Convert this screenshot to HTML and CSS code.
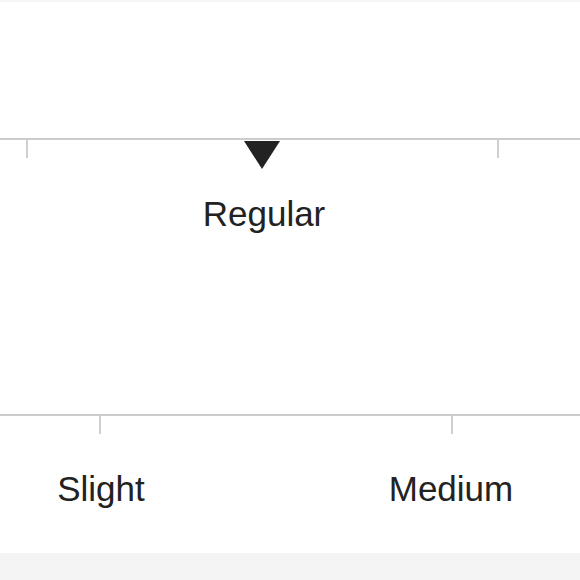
FILE: index.html
```html
<!DOCTYPE html>
<html lang="en">
<head>
<meta charset="utf-8">
<title>Scale</title>
<link rel="stylesheet" href="styles.css">
</head>
<body>
<div class="strip-top"></div>
<section class="scale scale-a">
  <div class="axis"></div>
  <div class="marks">
    <span class="tick tick-a1"></span>
    <span class="pointer"></span>
    <span class="tick tick-a2"></span>
  </div>
  <div class="labels">
    <span class="label label-regular">Regular</span>
  </div>
</section>
<section class="scale scale-b">
  <div class="axis"></div>
  <div class="marks">
    <span class="tick tick-b1"></span>
    <span class="tick tick-b2"></span>
  </div>
  <div class="labels">
    <span class="label label-slight">Slight</span>
    <span class="label label-medium">Medium</span>
  </div>
</section>
<div class="strip-bottom"></div>
</body>
</html>
```

FILE: styles.css
```css
html, body {
  margin: 0;
  padding: 0;
  background: #ffffff;
}
body {
  width: 580px;
  height: 580px;
  overflow: hidden;
  font-family: "Liberation Sans", Arial, sans-serif;
  color: #222222;
  display: flex;
  flex-direction: column;
}
.strip-top {
  height: 2px;
  background: #f5f5f5;
}
.scale-a {
  margin-top: 136px;
}
.scale-b {
  margin-top: 180px;
}
.axis {
  height: 2px;
  background: #cccccc;
}
.marks {
  display: flex;
  align-items: flex-start;
}
.scale-a .marks {
  height: 29px;
  padding-left: 26px;
}
.scale-b .marks {
  height: 18px;
  padding-left: 99px;
}
.tick {
  width: 2px;
  height: 18px;
  background: #d0d0d0;
  flex: none;
}
.pointer {
  flex: none;
  width: 0;
  height: 0;
  margin-top: 1px;
  margin-left: 216px;
  border-left: 18px solid transparent;
  border-right: 18px solid transparent;
  border-top: 28px solid #222222;
}
.tick-a2 {
  margin-left: 217px;
}
.tick-b2 {
  margin-left: 350px;
}
.labels {
  display: flex;
}
.scale-a .labels {
  margin-top: 25px;
  padding-left: 164px;
}
.scale-b .labels {
  margin-top: 35px;
  padding-left: 21px;
}
.label {
  font-size: 35px;
  line-height: 40px;
  text-align: center;
  flex: none;
}
.label-regular {
  width: 200px;
}
.label-slight {
  width: 160px;
}
.label-medium {
  width: 160px;
  margin-left: 190px;
}
.strip-bottom {
  margin-top: 44px;
  height: 27px;
  background: #f4f4f4;
}
```
